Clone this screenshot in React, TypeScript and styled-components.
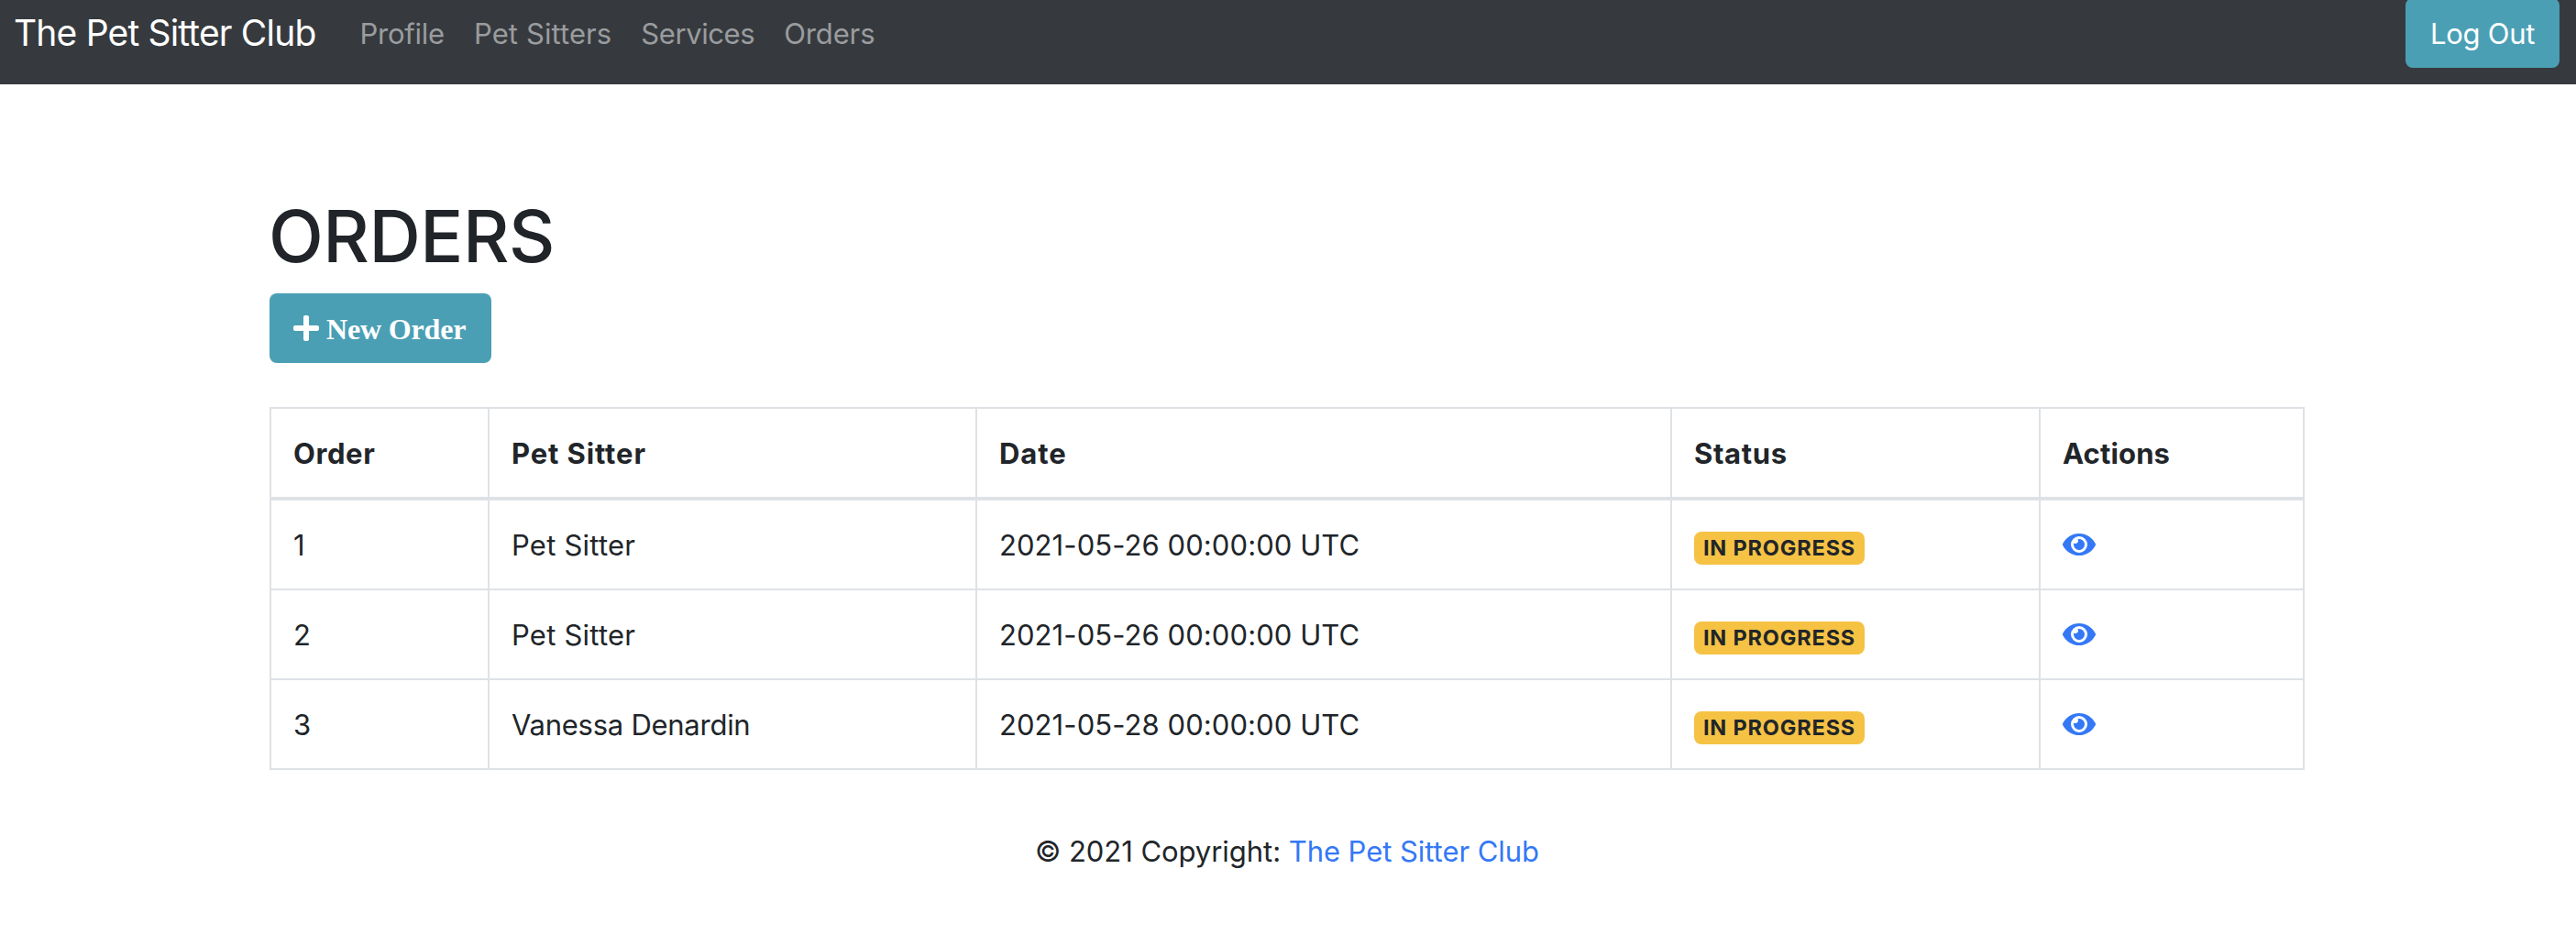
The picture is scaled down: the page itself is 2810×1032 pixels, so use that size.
import React from "react";
import styled, { createGlobalStyle } from "styled-components";
import { FaEye, FaPlus } from "react-icons/fa";

const GlobalStyle = createGlobalStyle`
  *, *::before, *::after { box-sizing: border-box; }
  body {
    margin: 0;
    background: #fff;
    color: #212529;
    font: 400 31px/48px Inter, "Liberation Sans", sans-serif;
  }
  a { color: inherit; text-decoration: none; }
`;

const Navbar = styled.nav`
  display: flex;
  align-items: flex-start;
  height: 92px;
  padding: 0 18px 0 15px;
  background: #363a3e;
`;

const Brand = styled.a`
  && { color: #fff; }
  width: 361.5px;
  padding-top: 6px;
  font-size: 39px;
  line-height: 60px;
  letter-spacing: -0.82px;
  white-space: nowrap;
`;

const NavList = styled.ul`
  display: flex;
  flex: 1;
  margin: 0;
  padding: 0;
  list-style: none;
`;

const NavLink = styled.a<{ $tracking: number }>`
  && { color: #9a9c9e; }
  display: block;
  padding: 13px 16px 11px;
  letter-spacing: ${(p) => p.$tracking}px;
`;

const Button = styled.button`
  display: flex;
  align-items: center;
  justify-content: center;
  height: 76px;
  padding: 0 26px;
  border: 0;
  border-radius: 8px;
  background: #4b9fb5;
  color: #fff;
  font: inherit;
  white-space: nowrap;
`;

const LogOutButton = styled(Button)`
  width: 168px;
  margin-top: -2px;
  padding-top: 2px;
  letter-spacing: -0.26px;
`;

const NewOrderButton = styled(Button)`
  gap: 8px;
  width: 242px;
  justify-content: flex-start;
  font: 700 32px/48px "Liberation Serif", serif;
  letter-spacing: -0.15px;

  svg {
    width: 28px;
    height: 32px;
  }

  span {
    padding-top: 2px;
  }
`;

const Main = styled.main`
  width: 2220px;
  margin-left: 294px;
  padding-top: 118px;
`;

const Title = styled.h1`
  margin: 0 0 14px -1px;
  font-size: 78px;
  font-weight: 500;
  line-height: 96px;
  letter-spacing: -0.44px;
`;

const Table = styled.table`
  width: 100%;
  margin-top: 48px;
  table-layout: fixed;
  border-collapse: separate;
  border-spacing: 0;
  border: solid #dee2e6;
  border-width: 2px 0 0 2px;
`;

const HeadCell = styled.th<{ $width: number; $tracking: number }>`
  width: ${(p) => p.$width}px;
  padding: 25px 24px 23px;
  border: solid #dee2e6;
  border-width: 0 2px 4px 0;
  text-align: left;
  font-weight: 700;
  letter-spacing: ${(p) => p.$tracking}px;
`;

const Cell = styled.td<{ $tracking?: number }>`
  height: 98px;
  padding: 25px 24px 0;
  border: solid #dee2e6;
  border-width: 0 2px 2px 0;
  vertical-align: top;
  letter-spacing: ${(p) => p.$tracking ?? 0}px;
`;

const Badge = styled.span`
  display: block;
  width: 186px;
  height: 36px;
  margin-top: 9px;
  border-radius: 8px;
  background: #f6c244;
  font-size: 23.5px;
  font-weight: 700;
  line-height: 36px;
  letter-spacing: 0.84px;
  text-align: center;
  white-space: nowrap;
`;

const ViewLink = styled.a`
  && { color: #3478f6; }
  display: block;
  width: 36px;
  margin-top: 7px;

  svg {
    display: block;
    width: 36px;
    height: 32px;
  }
`;

const Footer = styled.footer`
  margin-top: 65px;
  text-align: center;
  letter-spacing: -0.05px;
`;

const FooterLink = styled.a`
  && { color: #3478f6; }
`;

const links = [
  { label: "Profile", tracking: -0.24 },
  { label: "Pet Sitters", tracking: 0.1 },
  { label: "Services", tracking: -0.42 },
  { label: "Orders", tracking: -0.12 },
];

const columns = [
  { label: "Order", width: 238, tracking: 0.6 },
  { label: "Pet Sitter", width: 532, tracking: 0.88 },
  { label: "Date", width: 758, tracking: 0.9 },
  { label: "Status", width: 402, tracking: 0.65 },
  { label: "Actions", width: 288, tracking: 0.14 },
];

const orders = [
  { id: 1, sitter: "Pet Sitter", tracking: 0.22, date: "2021-05-26 00:00:00 UTC" },
  { id: 2, sitter: "Pet Sitter", tracking: 0.22, date: "2021-05-26 00:00:00 UTC" },
  { id: 3, sitter: "Vanessa Denardin", tracking: -0.26, date: "2021-05-28 00:00:00 UTC" },
];

export default function App() {
  return (
    <>
      <GlobalStyle />
      <Navbar>
        <Brand href="#">The Pet Sitter Club</Brand>
        <NavList>
          {links.map((l) => (
            <li key={l.label}>
              <NavLink href="#" $tracking={l.tracking}>{l.label}</NavLink>
            </li>
          ))}
        </NavList>
        <LogOutButton>Log Out</LogOutButton>
      </Navbar>
      <Main>
        <Title>ORDERS</Title>
        <NewOrderButton>
          <FaPlus />
          <span>New Order</span>
        </NewOrderButton>
        <Table>
          <thead>
            <tr>
              {columns.map((c) => (
                <HeadCell key={c.label} $width={c.width} $tracking={c.tracking}>{c.label}</HeadCell>
              ))}
            </tr>
          </thead>
          <tbody>
            {orders.map((o) => (
              <tr key={o.id}>
                <Cell>{o.id}</Cell>
                <Cell $tracking={o.tracking}>{o.sitter}</Cell>
                <Cell $tracking={0.08}>{o.date}</Cell>
                <Cell><Badge>IN PROGRESS</Badge></Cell>
                <Cell><ViewLink href="#" aria-label="View order"><FaEye /></ViewLink></Cell>
              </tr>
            ))}
          </tbody>
        </Table>
        <Footer>
          © 2021 Copyright: <FooterLink href="#">The Pet Sitter Club</FooterLink>
        </Footer>
      </Main>
    </>
  );
}
